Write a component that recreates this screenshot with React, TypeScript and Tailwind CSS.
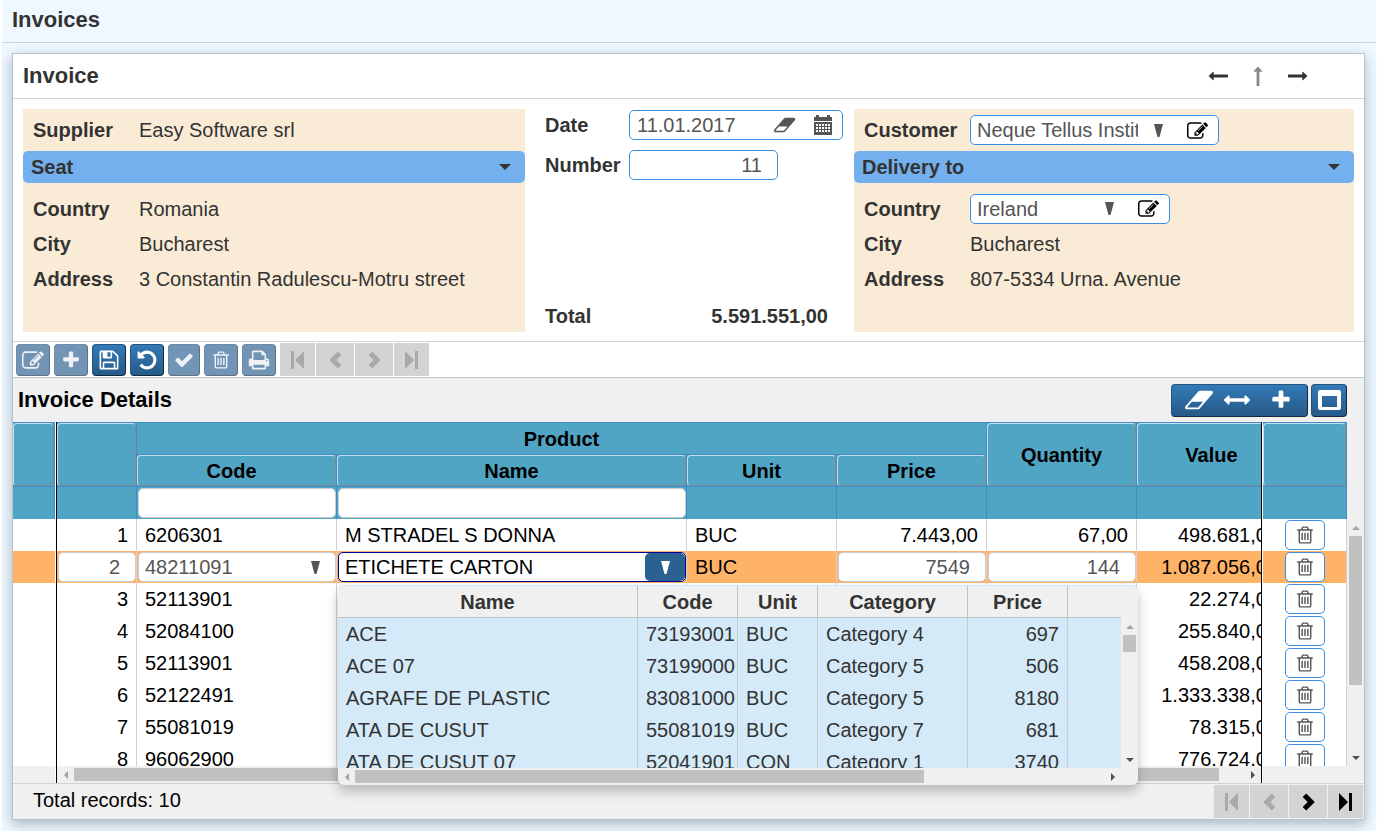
import React from "react";

type IconProps = { className?: string };

const fa = (d: string, viewBox = "0 0 1792 1792") =>
  function FaGlyph({ className }: IconProps) {
    return (
      <svg viewBox={viewBox} className={className} fill="currentColor" aria-hidden="true">
        <path d={d} />
      </svg>
    );
  };

const EditIcon = fa(
  "M888 1184l116-116-152-152-116 116v56h96v96h56zm440-720q-16-16-33 1l-350 350q-17 17-1 33t33-1l350-350q17-17 1-33zm80 594v190q0 119-84.5 203.5t-203.5 84.5h-832q-119 0-203.5-84.5t-84.5-203.5v-832q0-119 84.5-203.5t203.5-84.5h832q63 0 117 25 15 7 18 23 3 17-9 29l-49 49q-14 14-32 8-23-6-45-6h-832q-66 0-113 47t-47 113v832q0 66 47 113t113 47h832q66 0 113-47t47-113v-126q0-13 9-22l64-64q15-15 35-7t20 29zm-96-738l288 288-672 672h-288v-288zm444 132l-92 92-288-288 92-92q28-28 68-28t68 28l152 152q28 28 28 68t-28 68z",
  "0 -64 1792 1792"
);
const PlusIcon = fa(
  "M1600 736v192q0 40-28 68t-68 28h-416v416q0 40-28 68t-68 28h-192q-40 0-68-28t-28-68v-416h-416q-40 0-68-28t-28-68v-192q0-40 28-68t68-28h416v-416q0-40 28-68t68-28h192q40 0 68 28t28 68v416h416q40 0 68 28t28 68z"
);
const SaveIcon = fa(
  "M512 1536h768v-384h-768v384zm896 0h128v-896q0-14-10-38.5t-20-34.5l-281-281q-10-10-34-20t-39-10v416q0 40-28 68t-68 28h-576q-40 0-68-28t-28-68v-416h-128v1280h128v-416q0-40 28-68t68-28h832q40 0 68 28t28 68v416zm-384-928v-320q0-13-9.5-22.5t-22.5-9.5h-192q-13 0-22.5 9.5t-9.5 22.5v320q0 13 9.5 22.5t22.5 9.5h192q13 0 22.5-9.5t9.5-22.5zm640 32v928q0 40-28 68t-68 28h-1344q-40 0-68-28t-28-68v-1344q0-40 28-68t68-28h928q40 0 88 20t76 48l280 280q28 28 48 76t20 88z"
);
const UndoIcon = fa(
  "M1664 896q0 156-61 298t-164 245-245 164-298 61q-172 0-327-72.5t-264-204.5q-7-10-6.5-22.5t8.5-20.5l137-138q10-9 25-9 16 2 23 12 73 95 179 147t225 52q104 0 198.5-40.5t163.5-109.5 109.5-163.5 40.5-198.5-40.5-198.5-109.5-163.5-163.5-109.5-198.5-40.5q-98 0-188 35.5t-160 101.5l137 138q31 30 14 69-17 40-59 40h-448q-26 0-45-19t-19-45v-448q0-42 40-59 39-17 69 14l130 129q107-101 244.5-156.5t284.5-55.5q156 0 298 61t245 164 164 245 61 298z"
);
const CheckIcon = fa(
  "M1671 566q0 40-28 68l-724 724-136 136q-28 28-68 28t-68-28l-136-136-362-362q-28-28-28-68t28-68l136-136q28-28 68-28t68 28l294 295 656-657q28-28 68-28t68 28l136 136q28 28 28 68z"
);
const TrashIcon = fa(
  "M704 736v576q0 14-9 23t-23 9h-64q-14 0-23-9t-9-23v-576q0-14 9-23t23-9h64q14 0 23 9t9 23zm256 0v576q0 14-9 23t-23 9h-64q-14 0-23-9t-9-23v-576q0-14 9-23t23-9h64q14 0 23 9t9 23zm256 0v576q0 14-9 23t-23 9h-64q-14 0-23-9t-9-23v-576q0-14 9-23t23-9h64q14 0 23 9t9 23zm128 724v-948h-896v948q0 22 7 40.5t14.5 27 10.5 8.5h832q3 0 10.5-8.5t14.5-27 7-40.5zm-672-1076h448l-48-117q-7-9-17-11h-317q-10 2-17 11zm928 32v64q0 14-9 23t-23 9h-96v948q0 83-47 143.5t-113 60.5h-832q-66 0-113-58.5t-47-141.5v-952h-96q-14 0-23-9t-9-23v-64q0-14 9-23t23-9h309l70-167q15-37 54-63t79-26h320q40 0 79 26t54 63l70 167h309q14 0 23 9t9 23z"
);
const PrintIcon = fa(
  "M448 1536h896v-256h-896v256zm0-640h896v-384h-160q-40 0-68-28t-28-68v-160h-640v640zm1152 64q0-26-19-45t-45-19-45 19-19 45 19 45 45 19 45-19 19-45zm128 0v416q0 13-9.5 22.5t-22.5 9.5h-224v160q0 40-28 68t-68 28h-960q-40 0-68-28t-28-68v-160h-224q-13 0-22.5-9.5t-9.5-22.5v-416q0-79 56.5-135.5t135.5-56.5h64v-544q0-40 28-68t68-28h672q40 0 88 20t76 48l152 152q28 28 48 76t20 88v256h64q79 0 135.5 56.5t56.5 135.5z"
);
const EraserIcon = fa(
  "M960 1408l336-384h-768l-336 384h768zm1013-1077q15 34 9.5 71.5t-30.5 65.5l-896 1024q-38 44-96 44h-768q-38 0-69.5-20.5t-47.5-54.5q-15-34-9.5-71.5t30.5-65.5l896-1024q38-44 96-44h768q38 0 69.5 20.5t47.5 54.5z",
  "0 0 2048 1792"
);
const ResizeIcon = fa(
  "M1792 896q0 26-19 45l-256 256q-19 19-45 19t-45-19-19-45v-128h-1024v128q0 26-19 45t-45 19-45-19l-256-256q-19-19-19-45t19-45l256-256q19-19 45-19t45 19 19 45v128h1024v-128q0-26 19-45t45-19 45 19l256 256q19 19 19 45z"
);
const ArrowIcon = fa(
  "M1792 800v192q0 14-9 23t-23 9h-1248v224q0 21-19 29t-35-5l-384-350q-10-10-10-23 0-14 10-24l384-354q16-14 35-6 19 9 19 29v224h1248q14 0 23 9t9 23z"
);
const MaximizeIcon = fa("M2 0h19q2 0 2 2v16q0 2-2 2h-19q-2 0-2-2v-16q0-2 2-2zM4 6v11h15v-11z", "0 0 23 20");
const DropIcon = fa("M0 0h9L5.500 13h-2z", "0 0 9 13");
const CaretIcon = fa("M0 0h12l-6 6z", "0 0 12 6");
const ChevronIcon = fa("M9.500 0.500l4 4L8 10l5.500 5.500-4 4L0 10z", "0 0 14 20");
const FirstIcon = fa("M0 0h3v18h-3zM13 0v18l-9-9z", "0 0 13 18");

function CalendarIcon({ className }: IconProps) {
  return (
    <svg viewBox="0 0 18 20" className={className} aria-hidden="true" shapeRendering="crispEdges">
      <path fill="currentColor" d="M0 2h2V0h3v2h8V0h3v2h2v4H0zM0 7h18v13H0z" />
      <path
        fill="#fff"
        d="M2 9h2v2H2zM5 9h2v2H5zM8 9h2v2H8zM11 9h2v2h-2zM14 9h2v2h-2zM2 12h2v2H2zM5 12h2v2H5zM8 12h2v2H8zM11 12h2v2h-2zM14 12h2v2h-2zM2 15h2v2H2zM5 15h2v2H5zM8 15h2v2H8zM11 15h2v2h-2zM14 15h2v2h-2z"
      />
    </svg>
  );
}

type PagerKind = "first" | "prev" | "next" | "last";

function Pager({ enabled }: { enabled: PagerKind[] }) {
  const items: { kind: PagerKind; label: string }[] = [
    { kind: "first", label: "First page" },
    { kind: "prev", label: "Previous page" },
    { kind: "next", label: "Next page" },
    { kind: "last", label: "Last page" },
  ];
  return (
    <div className="flex gap-px">
      {items.map(({ kind, label }) => {
        const on = enabled.includes(kind);
        const edge = kind === "first" || kind === "last";
        const flip = kind === "next" || kind === "last" ? "rotate-180" : "";
        return (
          <button
            key={kind}
            type="button"
            aria-label={label}
            disabled={!on}
            className={`flex h-[33px] items-center justify-center bg-[#d3d3d3] ${edge ? "w-[35px]" : "w-[38px]"} ${
              on ? "text-black" : "text-[#a9a9a9]"
            }`}
          >
            {edge ? (
              <FirstIcon className={`h-[18px] w-[13px] ${flip}`} />
            ) : (
              <ChevronIcon className={`h-[18px] w-[13px] ${flip}`} />
            )}
          </button>
        );
      })}
    </div>
  );
}

const blueButton =
  "flex items-center justify-center rounded border border-[#245580] border-r-[#14283a] border-b-[#14283a] bg-linear-to-b from-[#337ab7] to-[#265a88] text-white";
const greyedButton =
  "flex items-center justify-center rounded border border-[#6d8cab] border-r-[#5f7183] border-b-[#5f7183] bg-[#7395b5] text-[#eef2f6]";

function ToolButton({
  label,
  disabled,
  width = "w-[34px]",
  children,
}: {
  label: string;
  disabled?: boolean;
  width?: string;
  children: React.ReactNode;
}) {
  return (
    <button
      type="button"
      aria-label={label}
      disabled={disabled}
      className={`${disabled ? greyedButton : blueButton} h-8 ${width}`}
    >
      {children}
    </button>
  );
}

function Field({ label, children }: { label: string; children: React.ReactNode }) {
  return (
    <div className="flex h-[35px] items-center">
      <dt className="w-[106px] shrink-0 font-bold">{label}</dt>
      <dd className="truncate">{children}</dd>
    </div>
  );
}

function SectionBar({ title }: { title: string }) {
  return (
    <button
      type="button"
      className="flex h-8 w-full items-center justify-between rounded-[5px] bg-[#74b0ee] pr-3.5 pl-2 font-bold"
    >
      {title}
      <CaretIcon className="h-1.5 w-3" />
    </button>
  );
}

const fieldBox = "flex h-[30px] items-center rounded-[5px] border border-[#3a8ee6] bg-white text-[#555]";

function Lookup({ id, value, width, label }: { id: string; value: string; width: string; label: string }) {
  return (
    <div className={`${fieldBox} ${width} pr-2.5 pl-1.5`}>
      <select id={id} aria-label={label} className="w-0 min-w-0 flex-1 appearance-none truncate outline-none text-clip">
        <option>{value}</option>
      </select>
      <DropIcon className="ml-4 h-[13px] w-[9px] shrink-0" />
      <button type="button" aria-label={`Edit ${label}`} className="ml-6 text-black">
        <EditIcon className="h-[21px] w-[21px]" />
      </button>
    </div>
  );
}

const rows = [
  { n: 1, code: "6206301", name: "M STRADEL S DONNA", unit: "BUC", price: "7.443,00", qty: "67,00", value: "498.681,00" },
  { n: 2, code: "48211091", name: "ETICHETE CARTON", unit: "BUC", price: "7549", qty: "144", value: "1.087.056,00", editing: true },
  { n: 3, code: "52113901", value: "22.274,00" },
  { n: 4, code: "52084100", value: "255.840,00" },
  { n: 5, code: "52113901", value: "458.208,00" },
  { n: 6, code: "52122491", value: "1.333.338,00" },
  { n: 7, code: "55081019", value: "78.315,00" },
  { n: 8, code: "96062900", value: "776.724,00" },
];

const products = [
  ["ACE", "73193001", "BUC", "Category 4", "697"],
  ["ACE 07", "73199000", "BUC", "Category 5", "506"],
  ["AGRAFE DE PLASTIC", "83081000", "BUC", "Category 5", "8180"],
  ["ATA DE CUSUT", "55081019", "BUC", "Category 7", "681"],
  ["ATA DE CUSUT 07", "52041901", "CON", "Category 1", "3740"],
];

const headCell = "border-t border-r border-[#428bca] bg-[#51a5c4] p-0";
const bevel =
  "flex items-center justify-center rounded border border-t-[#c6dfe9] border-l-[#c6dfe9] border-r-[#7d8f97] border-b-[#7d8f97]";
const bodyCell = "h-8 border-r border-[#d3d3d3] p-0";
const editBox = "h-[30px] w-full rounded-[5px] border border-[#ccc] bg-white text-[#555] outline-none";

function ScrollArrow({ dir, dim }: { dir: "up" | "down" | "left" | "right"; dim?: boolean }) {
  const turn = { up: "rotate-180", down: "", left: "rotate-90", right: "-rotate-90" }[dir];
  const box = dir === "up" || dir === "down" ? "h-4 w-full" : "h-full w-[17px]";
  return (
    <div className={`flex ${box} shrink-0 items-center justify-center ${dim ? "text-[#a3a3a3]" : "text-[#505050]"}`}>
      <CaretIcon className={`h-1 w-2 ${turn}`} />
    </div>
  );
}

function FrozenHead() {
  return (
    <thead>
      <tr>
        <th className={headCell}>
          <div className={`${bevel} h-[63px]`} />
        </th>
      </tr>
      <tr>
        <th className={`${headCell} h-[33px]`} />
      </tr>
    </thead>
  );
}

function ProductPopup() {
  const head = "h-8 border-r border-b border-[#b8c4c8] p-0 text-center font-bold";
  return (
    <div className="absolute top-[163px] left-[281px] z-10 flex h-[200px] w-[800px] flex-col overflow-hidden rounded-md border-t border-[#d4eaf8] bg-[#f0f0f0] text-[#333] shadow-[0_6px_12px_rgba(0,0,0,0.25)]">
      <div className="flex h-[182px]">
        <div className="flex-1 overflow-hidden">
          <table className="w-full table-fixed border-separate border-spacing-0">
            <colgroup>
              <col className="w-[300px]" />
              <col className="w-[100px]" />
              <col className="w-20" />
              <col className="w-[150px]" />
              <col className="w-[100px]" />
              <col />
            </colgroup>
            <thead>
              <tr>
                {["Name", "Code", "Unit", "Category", "Price"].map((h) => (
                  <th key={h} className={head}>
                    {h}
                  </th>
                ))}
                <th className="border-b border-[#b8c4c8] p-0" />
              </tr>
            </thead>
            <tbody className="bg-[#d4eaf8]">
              {products.map((p) => (
                <tr key={p[0]}>
                  {p.map((v, i) => (
                    <td
                      key={i}
                      className={`h-8 border-r border-[#c3cdd3] p-0 whitespace-nowrap ${i === 4 ? "pr-2 text-right" : "pl-2"}`}
                    >
                      {v}
                    </td>
                  ))}
                  <td className="p-0" />
                </tr>
              ))}
            </tbody>
          </table>
        </div>
        <div className="flex w-[17px] flex-col items-center pt-[33px]">
          <ScrollArrow dir="up" dim />
          <div className="h-[17px] w-[13px] bg-[#c1c1c1]" />
          <div className="flex-1" />
          <ScrollArrow dir="down" />
        </div>
      </div>
      <div className="flex flex-1 items-center pr-[17px]">
        <ScrollArrow dir="left" dim />
        <div className="h-[13px] w-[569px] bg-[#c1c1c1]" />
        <div className="flex-1" />
        <ScrollArrow dir="right" />
      </div>
    </div>
  );
}

function DetailsGrid() {
  return (
    <div className="flex text-black">
      <div className="flex h-[361px] w-[43px] shrink-0 flex-col bg-white pr-px">
        <div className="h-[344px] overflow-hidden">
          <table className="w-full border-separate border-spacing-0">
            <FrozenHead />
            <tbody>
              {rows.map((r) => (
                <tr key={r.n}>
                  <td className={`h-8 p-0 ${r.editing ? "bg-[#ffb366]" : "bg-white"}`} />
                </tr>
              ))}
            </tbody>
          </table>
        </div>
        <div className="flex-1 bg-[#f0f0f0]" />
      </div>

      <div className="relative min-w-0 flex-1 border-x border-black bg-white">
        <div className="h-[344px] overflow-hidden">
          <table className="w-[1230px] table-fixed border-separate border-spacing-0">
            <colgroup>
              <col className="w-20" />
              <col className="w-[200px]" />
              <col className="w-[350px]" />
              <col className="w-[150px]" />
              <col className="w-[150px]" />
              <col className="w-[150px]" />
              <col className="w-[150px]" />
            </colgroup>
            <thead>
              <tr>
                <th rowSpan={2} className={headCell}>
                  <div className={`${bevel} h-[63px]`} />
                </th>
                <th colSpan={4} className={`${headCell} h-8`}>
                  Product
                </th>
                <th rowSpan={2} className={headCell}>
                  <div className={`${bevel} h-[63px]`}>Quantity</div>
                </th>
                <th rowSpan={2} className={headCell}>
                  <div className={`${bevel} h-[63px]`}>Value</div>
                </th>
              </tr>
              <tr>
                <th className={headCell}>
                  <div className={`${bevel} h-[31px] pr-2.5`}>Code</div>
                </th>
                {["Name", "Unit", "Price"].map((h) => (
                  <th key={h} className={headCell}>
                    <div className={`${bevel} h-[31px]`}>{h}</div>
                  </th>
                ))}
              </tr>
              <tr>
                <th className={`${headCell} h-[33px]`} />
                <th className={`${headCell} pl-px`}>
                  <input aria-label="Filter by code" className={`${editBox} block px-2 font-normal`} />
                </th>
                <th className={`${headCell} pl-px`}>
                  <input aria-label="Filter by name" className={`${editBox} block px-2 font-normal`} />
                </th>
                <th className={headCell} />
                <th className={headCell} />
                <th className={headCell} />
                <th className={headCell} />
              </tr>
            </thead>
            <tbody>
              {rows.map((r) =>
                r.editing ? (
                  <tr key={r.n} className="bg-[#ffb366]">
                    <td className={`${bodyCell} pl-px`}>
                      <input aria-label="Row" defaultValue={r.n} className={`${editBox} block pr-[15px] text-right`} />
                    </td>
                    <td className={`${bodyCell} pl-px`}>
                      <div className={`${editBox} flex items-center pr-[15px] pl-1.5`}>
                        <select aria-label="Code" className="min-w-0 flex-1 appearance-none outline-none">
                          <option>{r.code}</option>
                        </select>
                        <DropIcon className="h-[13px] w-[9px]" />
                      </div>
                    </td>
                    <td className={`${bodyCell} pl-px`}>
                      <div className="flex h-[30px] items-center overflow-hidden rounded-[5px] border border-[#00009b] bg-white">
                        <input
                          aria-label="Name"
                          role="combobox"
                          aria-expanded="true"
                          aria-controls="product-list"
                          defaultValue={r.name}
                          className="min-w-0 flex-1 pl-1.5 outline-none"
                        />
                        <button
                          type="button"
                          aria-label="Show products"
                          className="flex h-7 w-10 items-center justify-center rounded-[5px] bg-[#2a6191] text-white"
                        >
                          <DropIcon className="h-[13px] w-[9px]" />
                        </button>
                      </div>
                    </td>
                    <td className={`${bodyCell} pl-2`}>{r.unit}</td>
                    <td className={`${bodyCell} pl-px`}>
                      <input aria-label="Price" defaultValue={r.price} className={`${editBox} block pr-[15px] text-right`} />
                    </td>
                    <td className={`${bodyCell} pl-px`}>
                      <input aria-label="Quantity" defaultValue={r.qty} className={`${editBox} block pr-[15px] text-right`} />
                    </td>
                    <td className={`${bodyCell} pr-2 text-right`}>{r.value}</td>
                  </tr>
                ) : (
                  <tr key={r.n}>
                    <td className={`${bodyCell} pr-2 text-right`}>{r.n}</td>
                    <td className={`${bodyCell} pl-2`}>{r.code}</td>
                    <td className={`${bodyCell} pl-2`}>{r.name}</td>
                    <td className={`${bodyCell} pl-2`}>{r.unit}</td>
                    <td className={`${bodyCell} pr-2 text-right`}>{r.price}</td>
                    <td className={`${bodyCell} pr-2 text-right`}>{r.qty}</td>
                    <td className={`${bodyCell} pr-2 text-right`}>{r.value}</td>
                  </tr>
                )
              )}
            </tbody>
          </table>
        </div>
        <div className="flex h-[17px] items-center bg-[#f0f0f0]">
          <ScrollArrow dir="left" dim />
          <div className="h-[13px] flex-1 bg-[#c1c1c1]" />
          <div className="w-[25px]" />
          <ScrollArrow dir="right" />
        </div>
        <div id="product-list">
          <ProductPopup />
        </div>
      </div>

      <div className="flex h-[361px] w-[85px] shrink-0 flex-col bg-white pl-px">
        <div className="h-[344px] overflow-hidden">
          <table className="w-full border-separate border-spacing-0">
            <FrozenHead />
            <tbody>
              {rows.map((r) => (
                <tr key={r.n}>
                  <td className={`${bodyCell} ${r.editing ? "bg-[#ffb366]" : "bg-white"}`}>
                    <button
                      type="button"
                      aria-label={`Delete row ${r.n}`}
                      className="mx-auto flex h-[30px] w-10 items-center justify-center rounded-[5px] border border-[#3a8ee6] bg-white text-[#555]"
                    >
                      <TrashIcon className="h-5 w-5" />
                    </button>
                  </td>
                </tr>
              ))}
            </tbody>
          </table>
        </div>
        <div className="flex-1 bg-[#f0f0f0]" />
      </div>

      <div className="flex h-[344px] w-[17px] shrink-0 flex-col items-center pt-[98px]">
        <ScrollArrow dir="up" dim />
        <div className="h-[149px] w-[13px] bg-[#c1c1c1]" />
        <div className="flex-1" />
        <ScrollArrow dir="down" />
      </div>
    </div>
  );
}

export default function App() {
  return (
    <div className="bg-white px-0.5 font-['Liberation_Sans',Arial,sans-serif] text-[20px] leading-6 text-[#333]">
      <div className="bg-[#f0f8ff] pb-[11px]">
        <header className="flex h-[43px] items-center border-b border-[#d3d3d3] px-2.5 pb-0.5">
          <h1 className="text-[22px] font-bold">Invoices</h1>
        </header>

        <main className="mt-2.5 mr-[11px] ml-2.5 border border-[#b8c4c8] bg-white shadow-[0_4px_12px_rgba(60,80,100,0.4)]">
          <div className="flex h-[45px] items-center justify-between border-b border-[#d3d3d3] pr-14 pl-2.5">
            <h2 className="text-[22px] font-bold">Invoice</h2>
            <nav className="flex items-center gap-5">
              <button type="button" aria-label="Previous invoice">
                <ArrowIcon className="h-5 w-5" />
              </button>
              <button type="button" aria-label="Back to list" className="text-[#888]">
                <ArrowIcon className="h-5 w-5 rotate-90" />
              </button>
              <button type="button" aria-label="Next invoice">
                <ArrowIcon className="h-5 w-5 rotate-180" />
              </button>
            </nav>
          </div>

          <div className="grid grid-cols-[502fr_329px_500fr] border-b border-[#d3d3d3] px-2.5 pt-2.5 pb-[9px]">
            <section className="min-h-[223px] bg-[#faebd7]">
              <dl className="flex h-[42px] items-center px-2.5">
                <Field label="Supplier">Easy Software srl</Field>
              </dl>
              <SectionBar title="Seat" />
              <dl className="px-2.5 pt-2">
                <Field label="Country">Romania</Field>
                <Field label="City">Bucharest</Field>
                <Field label="Address">3 Constantin Radulescu-Motru street</Field>
              </dl>
            </section>

            <section className="flex flex-col pt-px pr-[11px] pl-5">
              <div className="flex flex-col gap-2.5">
                <div className="flex items-center">
                  <label htmlFor="date" className="w-[84px] shrink-0 font-bold">
                    Date
                  </label>
                  <div className={`${fieldBox} min-w-0 flex-1 pr-2.5 pl-[7px]`}>
                    <input id="date" defaultValue="11.01.2017" className="min-w-0 flex-1 outline-none" />
                    <button type="button" aria-label="Clear date">
                      <EraserIcon className="h-5 w-[23px]" />
                    </button>
                    <button type="button" aria-label="Pick date" className="ml-[18px]">
                      <CalendarIcon className="h-5 w-[18px]" />
                    </button>
                  </div>
                </div>
                <div className="flex items-center">
                  <label htmlFor="number" className="w-[84px] shrink-0 font-bold">
                    Number
                  </label>
                  <input id="number" defaultValue="11" className={`${fieldBox} w-[149px] pr-[15px] text-right outline-none`} />
                </div>
              </div>
              <div className="mt-auto flex justify-between pr-[15px] pb-1 font-bold">
                <span>Total</span>
                <span>5.591.551,00</span>
              </div>
            </section>

            <section className="min-h-[223px] bg-[#faebd7]">
              <dl className="flex h-[42px] items-center px-2.5">
                <Field label="Customer">
                  <Lookup id="customer" label="Customer" value="Neque Tellus Institute" width="w-[249px]" />
                </Field>
              </dl>
              <SectionBar title="Delivery to" />
              <dl className="px-2.5 pt-2">
                <Field label="Country">
                  <Lookup id="country" label="Country" value="Ireland" width="w-[200px]" />
                </Field>
                <Field label="City">Bucharest</Field>
                <Field label="Address">807-5334 Urna. Avenue</Field>
              </dl>
            </section>
          </div>

          <div className="flex items-center gap-1 border-b border-[#b8c4c8] px-[3px] py-px" role="toolbar">
            <ToolButton label="Edit" disabled>
              <EditIcon className="h-[22px] w-[22px]" />
            </ToolButton>
            <ToolButton label="Add" disabled>
              <PlusIcon className="h-5 w-5" />
            </ToolButton>
            <ToolButton label="Save">
              <SaveIcon className="h-[22px] w-[22px]" />
            </ToolButton>
            <ToolButton label="Undo">
              <UndoIcon className="h-[22px] w-[22px]" />
            </ToolButton>
            <ToolButton label="Confirm" disabled width="w-8">
              <CheckIcon className="h-5 w-5" />
            </ToolButton>
            <ToolButton label="Delete" disabled>
              <TrashIcon className="h-5 w-5" />
            </ToolButton>
            <ToolButton label="Print" disabled>
              <PrintIcon className="h-[22px] w-[22px]" />
            </ToolButton>
            <Pager enabled={[]} />
          </div>

          <div className="bg-[#f0f0f0] text-black">
            <div className="flex h-11 items-center justify-between pr-[17px] pl-[5px]">
              <h3 className="text-[22px] font-bold">Invoice Details</h3>
              <div className="flex gap-[3px]">
                <div className={`${blueButton} h-[33px] w-[137px] gap-2.5 pr-1`}>
                  <button type="button" aria-label="Clear filters">
                    <EraserIcon className="h-[26px] w-[30px]" />
                  </button>
                  <button type="button" aria-label="Fit columns">
                    <ResizeIcon className="h-[26px] w-[26px]" />
                  </button>
                  <button type="button" aria-label="Add row" className="ml-2.5">
                    <PlusIcon className="h-[22px] w-[22px]" />
                  </button>
                </div>
                <button type="button" aria-label="Maximize" className={`${blueButton} h-[33px] w-9`}>
                  <MaximizeIcon className="h-5 w-[23px]" />
                </button>
              </div>
            </div>
            <DetailsGrid />
            <footer className="flex items-start justify-between border-t border-[#d3d3d3] pt-px pr-px pb-px pl-5">
              <span className="leading-[30px]">Total records: 10</span>
              <Pager enabled={["next", "last"]} />
            </footer>
          </div>
        </main>
      </div>
    </div>
  );
}
